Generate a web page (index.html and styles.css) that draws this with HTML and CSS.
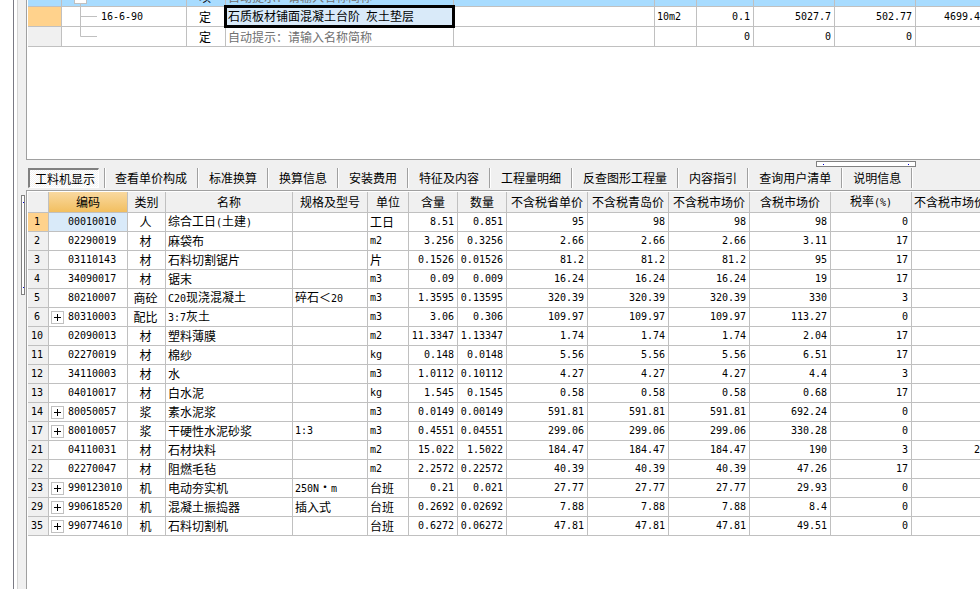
FILE: index.html
```html
<!DOCTYPE html>
<html lang="zh-CN">
<head>
<meta charset="utf-8">
<title>工料机显示</title>
<link rel="stylesheet" href="styles.css">
</head>
<body>
<div class="app">
<div class="edge"></div>
<aside class="rail"><div class="grip grip-v"></div></aside>
<main class="main">
<section class="upper">
<table class="grid items">
<colgroup><col class="w34"><col class="w125"><col class="w39"><col class="w228"><col class="w201"><col class="w42"><col class="w57"><col class="w81"><col class="w81"><col></colgroup>
<tbody>
<tr class="current"><th scope="row" class="no bold">2</th><td class="tree"><svg width="124" height="19" viewBox="0 0 124 19"><path d="M18.500 17V19" stroke="#c0c0c0"/><rect x="12.500" y="4.500" width="12" height="12" fill="#fff" stroke="#c0c0c0"/><path d="M15 10.500h7" stroke="#000"/></svg></td><td class="mid">项</td><td class="hint">自动提示：请输入名称简称</td><td></td><td class="n"></td><td class="r">0</td><td class="r">502.76</td><td class="r">502.76</td><td class="r"></td></tr>
<tr><th scope="row" class="no on"></th><td class="tree"><svg width="124" height="19" viewBox="0 0 124 19"><path d="M18.500 0V19M18.500 9.500H35" stroke="#c0c0c0" fill="none"/></svg><span class="n label">16-6-90</span></td><td class="mid">定</td><td class="picked">石质板材铺面混凝土台阶<span class="n"> </span>灰土垫层</td><td></td><td class="n">10m2</td><td class="r">0.1</td><td class="r">5027.7</td><td class="r">502.77</td><td class="r flush">4699.4</td></tr>
<tr><th scope="row" class="no"></th><td class="tree"><svg width="124" height="19" viewBox="0 0 124 19"><path d="M18.500 0V9.500H35" stroke="#c0c0c0" fill="none"/></svg></td><td class="mid">定</td><td class="hint">自动提示：请输入名称简称</td><td></td><td></td><td class="r">0</td><td class="r">0</td><td class="r">0</td><td></td></tr>
</tbody>
</table>
</section>
<nav class="tabs">
<button class="tab active">工料机显示</button>
<button class="tab first">查看单价构成</button><button class="tab">标准换算</button><button class="tab">换算信息</button><button class="tab">安装费用</button><button class="tab">特征及内容</button><button class="tab">工程量明细</button><button class="tab">反查图形工程量</button><button class="tab">内容指引</button><button class="tab">查询用户清单</button><button class="tab">说明信息</button>
<div class="grip grip-h"></div>
</nav>
<section class="lower">
<table class="grid detail">
<colgroup><col class="w21"><col class="w79"><col class="w38"><col class="w127"><col class="w75"><col class="w41"><col class="w49"><col class="w49"><col class="w81"><col class="w81"><col class="w81"><col class="w81"><col class="w81"><col></colgroup>
<thead>
<tr><th></th><th class="sorted">编码</th><th>类别</th><th>名称</th><th>规格及型号</th><th>单位</th><th>含量</th><th>数量</th><th>不含税省单价</th><th>不含税青岛价</th><th>不含税市场价</th><th>含税市场价</th><th>税率<span class="n">(%)</span></th><th class="cut">不含税市场价</th></tr>
</thead>
<tbody>
<tr><th scope="row" class="no on">1</th><td class="code sel">00010010</td><td class="mid">人</td><td>综合工日<span class="n">(</span>土建<span class="n">)</span></td><td></td><td>工日</td><td class="r">8.51</td><td class="r">0.851</td><td class="r">95</td><td class="r">98</td><td class="r">98</td><td class="r">98</td><td class="r">0</td><td></td></tr>
<tr><th scope="row" class="no">2</th><td class="code">02290019</td><td class="mid">材</td><td>麻袋布</td><td></td><td class="n">m2</td><td class="r">3.256</td><td class="r">0.3256</td><td class="r">2.66</td><td class="r">2.66</td><td class="r">2.66</td><td class="r">3.11</td><td class="r">17</td><td></td></tr>
<tr><th scope="row" class="no">3</th><td class="code">03110143</td><td class="mid">材</td><td>石料切割锯片</td><td></td><td>片</td><td class="r">0.1526</td><td class="r">0.01526</td><td class="r">81.2</td><td class="r">81.2</td><td class="r">81.2</td><td class="r">95</td><td class="r">17</td><td></td></tr>
<tr><th scope="row" class="no">4</th><td class="code">34090017</td><td class="mid">材</td><td>锯末</td><td></td><td class="n">m3</td><td class="r">0.09</td><td class="r">0.009</td><td class="r">16.24</td><td class="r">16.24</td><td class="r">16.24</td><td class="r">19</td><td class="r">17</td><td></td></tr>
<tr><th scope="row" class="no">5</th><td class="code">80210007</td><td class="mid">商砼</td><td><span class="n">C20</span>现浇混凝土</td><td>碎石＜<span class="n">20</span></td><td class="n">m3</td><td class="r">1.3595</td><td class="r">0.13595</td><td class="r">320.39</td><td class="r">320.39</td><td class="r">320.39</td><td class="r">330</td><td class="r">3</td><td></td></tr>
<tr><th scope="row" class="no">6</th><td class="code"><button class="plus" aria-label="展开"></button>80310003</td><td class="mid">配比</td><td><span class="n">3:7</span>灰土</td><td></td><td class="n">m3</td><td class="r">3.06</td><td class="r">0.306</td><td class="r">109.97</td><td class="r">109.97</td><td class="r">109.97</td><td class="r">113.27</td><td class="r">0</td><td></td></tr>
<tr><th scope="row" class="no">10</th><td class="code">02090013</td><td class="mid">材</td><td>塑料薄膜</td><td></td><td class="n">m2</td><td class="r">11.3347</td><td class="r">1.13347</td><td class="r">1.74</td><td class="r">1.74</td><td class="r">1.74</td><td class="r">2.04</td><td class="r">17</td><td></td></tr>
<tr><th scope="row" class="no">11</th><td class="code">02270019</td><td class="mid">材</td><td>棉纱</td><td></td><td class="n">kg</td><td class="r">0.148</td><td class="r">0.0148</td><td class="r">5.56</td><td class="r">5.56</td><td class="r">5.56</td><td class="r">6.51</td><td class="r">17</td><td></td></tr>
<tr><th scope="row" class="no">12</th><td class="code">34110003</td><td class="mid">材</td><td>水</td><td></td><td class="n">m3</td><td class="r">1.0112</td><td class="r">0.10112</td><td class="r">4.27</td><td class="r">4.27</td><td class="r">4.27</td><td class="r">4.4</td><td class="r">3</td><td></td></tr>
<tr><th scope="row" class="no">13</th><td class="code">04010017</td><td class="mid">材</td><td>白水泥</td><td></td><td class="n">kg</td><td class="r">1.545</td><td class="r">0.1545</td><td class="r">0.58</td><td class="r">0.58</td><td class="r">0.58</td><td class="r">0.68</td><td class="r">17</td><td></td></tr>
<tr><th scope="row" class="no">14</th><td class="code"><button class="plus" aria-label="展开"></button>80050057</td><td class="mid">浆</td><td>素水泥浆</td><td></td><td class="n">m3</td><td class="r">0.0149</td><td class="r">0.00149</td><td class="r">591.81</td><td class="r">591.81</td><td class="r">591.81</td><td class="r">692.24</td><td class="r">0</td><td></td></tr>
<tr><th scope="row" class="no">17</th><td class="code"><button class="plus" aria-label="展开"></button>80010057</td><td class="mid">浆</td><td>干硬性水泥砂浆</td><td class="n">1:3</td><td class="n">m3</td><td class="r">0.4551</td><td class="r">0.04551</td><td class="r">299.06</td><td class="r">299.06</td><td class="r">299.06</td><td class="r">330.28</td><td class="r">0</td><td></td></tr>
<tr><th scope="row" class="no">21</th><td class="code">04110031</td><td class="mid">材</td><td>石材块料</td><td></td><td class="n">m2</td><td class="r">15.022</td><td class="r">1.5022</td><td class="r">184.47</td><td class="r">184.47</td><td class="r">184.47</td><td class="r">190</td><td class="r">3</td><td class="r flush">2</td></tr>
<tr><th scope="row" class="no">22</th><td class="code">02270047</td><td class="mid">材</td><td>阻燃毛毡</td><td></td><td class="n">m2</td><td class="r">2.2572</td><td class="r">0.22572</td><td class="r">40.39</td><td class="r">40.39</td><td class="r">40.39</td><td class="r">47.26</td><td class="r">17</td><td></td></tr>
<tr><th scope="row" class="no">23</th><td class="code"><button class="plus" aria-label="展开"></button>990123010</td><td class="mid">机</td><td>电动夯实机</td><td><span class="n">250N</span>・<span class="n">m</span></td><td>台班</td><td class="r">0.21</td><td class="r">0.021</td><td class="r">27.77</td><td class="r">27.77</td><td class="r">27.77</td><td class="r">29.93</td><td class="r">0</td><td></td></tr>
<tr><th scope="row" class="no">29</th><td class="code"><button class="plus" aria-label="展开"></button>990618520</td><td class="mid">机</td><td>混凝土振捣器</td><td>插入式</td><td>台班</td><td class="r">0.2692</td><td class="r">0.02692</td><td class="r">7.88</td><td class="r">7.88</td><td class="r">7.88</td><td class="r">8.4</td><td class="r">0</td><td></td></tr>
<tr><th scope="row" class="no">35</th><td class="code"><button class="plus" aria-label="展开"></button>990774610</td><td class="mid">机</td><td>石料切割机</td><td></td><td>台班</td><td class="r">0.6272</td><td class="r">0.06272</td><td class="r">47.81</td><td class="r">47.81</td><td class="r">47.81</td><td class="r">49.51</td><td class="r">0</td><td></td></tr>
</tbody>
</table>
</section>
</main>
</div>
</body>
</html>
```

FILE: styles.css
```css
* { box-sizing: border-box; }

body {
  margin: 0;
  background: #fff;
  color: #000;
  font: 12px/18px "Noto Sans CJK SC", sans-serif;
}

button { font: inherit; color: inherit; border: 0; padding: 0; background: none; }

.app { display: flex; min-height: 100vh; overflow: hidden; }
.edge { width: 17px; flex: none; border-right: 3px solid #fff; background: linear-gradient(#7a7a84, #7a7a84) right / 1px 100% no-repeat; }
.rail { position: relative; width: 9px; flex: none; background: #f0f0f0; border-left: 1px solid #d4d4d4; }
.main { flex: 1; min-width: 0; display: flex; flex-direction: column; }

.upper {
  height: 160px;
  overflow: hidden;
  padding-left: 1px;
  border-left: 1px solid #a0a0a0;
  border-bottom: 1px solid #a0a0a0;
}
.items { margin-top: -13px; }

.lower {
  flex: 1;
  overflow: hidden;
  padding: 1px 0 0 1px;
  border-left: 1px solid #a0a0a0;
  border-top: 1px solid #a0a0a0;
}

/* Tables */
.grid { width: 100%; table-layout: fixed; border-collapse: separate; border-spacing: 0; line-height: 14px; }
.grid th, .grid td {
  height: 19px;
  padding: 0 2px;
  border-right: 1px solid #c0c0c0;
  border-bottom: 1px solid #c0c0c0;
  font-weight: 400;
  text-align: left;
  white-space: nowrap;
  overflow: hidden;
}
.items th, .items td { height: 20px; }
.grid tr > :last-child { border-right: 0; }
.detail thead th { height: 21px; padding: 0; background: #f0f0f0; text-align: center; }
.grid thead .sorted { background: linear-gradient(#f9d9a0, #f2bf60); }
.grid thead .cut { text-align: left; padding-left: 2px; }

.n, .grid .r, .grid .no, .grid .code, .grid td.n { font-family: "DejaVu Sans Mono", monospace; font-size: 10px; }
.grid .r { text-align: right; padding: 0 3px 0 0; }
.grid .flush { padding-right: 0; }
.grid .mid { text-align: center; padding: 0 2px 0 0; }
.grid .no { text-align: center; padding: 0 2px 0 0; background: #f0f0f0; }
.grid .on { background: #ffd28c; }
.grid .bold { font-weight: 700; }
.grid .code { position: relative; padding-left: 19px; }
.grid .sel { background: #d9eaf9; }
.grid .hint { color: #707070; }
.current td, .grid .current .no { background: #a8dcff; }

.grid .tree { padding: 0; position: relative; }
.tree svg { display: block; }
.tree .label { position: absolute; left: 39px; top: 0; line-height: 20px; }

.grid .picked { position: relative; overflow: visible; background: #d9eaf9; }
.picked::after { content: ""; position: absolute; inset: -2px; border: 3px solid #000; }

.plus {
  position: absolute;
  left: 2px;
  top: 3px;
  width: 13px;
  height: 13px;
  border: 1px solid #c0c0c0;
  background:
    linear-gradient(#000, #000) center / 7px 1px no-repeat,
    linear-gradient(#000, #000) center / 1px 7px no-repeat,
    #fff;
}

.w21 { width: 21px; }
.w34 { width: 34px; }
.w38 { width: 38px; }
.w39 { width: 39px; }
.w41 { width: 41px; }
.w42 { width: 42px; }
.w49 { width: 49px; }
.w57 { width: 57px; }
.w75 { width: 75px; }
.w79 { width: 79px; }
.w81 { width: 81px; }
.w125 { width: 125px; }
.w127 { width: 127px; }
.w201 { width: 201px; }
.w228 { width: 228px; }

/* Tabs */
.tabs { position: relative; display: flex; height: 30px; padding: 8px 0 2px 2px; background: #f0f0f0; }
.tab { height: 20px; padding: 0 10px; border-right: 1px solid #a0a0a0; box-shadow: 1px 0 #fff; white-space: nowrap; }
.tab + .tab { border-left: 1px solid transparent; }
.tab.active {
  width: 71px;
  margin-right: 5px;
  padding: 0 0 0 2px;
  border: 1px solid #fff;
  border-top: 2px solid #808080;
  border-left: 2px solid #808080;
  background: repeating-conic-gradient(#fff 0 25%, #f2f2f2 0 50%) 0 0 / 2px 2px;
  box-shadow: none;
}
.tab.tab.first { border-left: 1px solid #a0a0a0; box-shadow: 1px 0 #fff, inset 1px 0 #fff; }

/* Splitter grips */
.grip { position: absolute; border: 1px solid #808080; }
.grip-h {
  right: 64px;
  top: 1px;
  width: 100px;
  height: 6px;
  background: linear-gradient(#00c, #00c) 6px 2px / 1px 1px no-repeat, linear-gradient(#00c, #00c) 91px 2px / 1px 1px no-repeat, #fff;
}
.grip-v {
  left: 3px;
  top: 195px;
  width: 4px;
  height: 100px;
  background: linear-gradient(#00c, #00c) 1px 6px / 1px 1px no-repeat, linear-gradient(#00c, #00c) 1px 91px / 1px 1px no-repeat, #fff;
}
```
